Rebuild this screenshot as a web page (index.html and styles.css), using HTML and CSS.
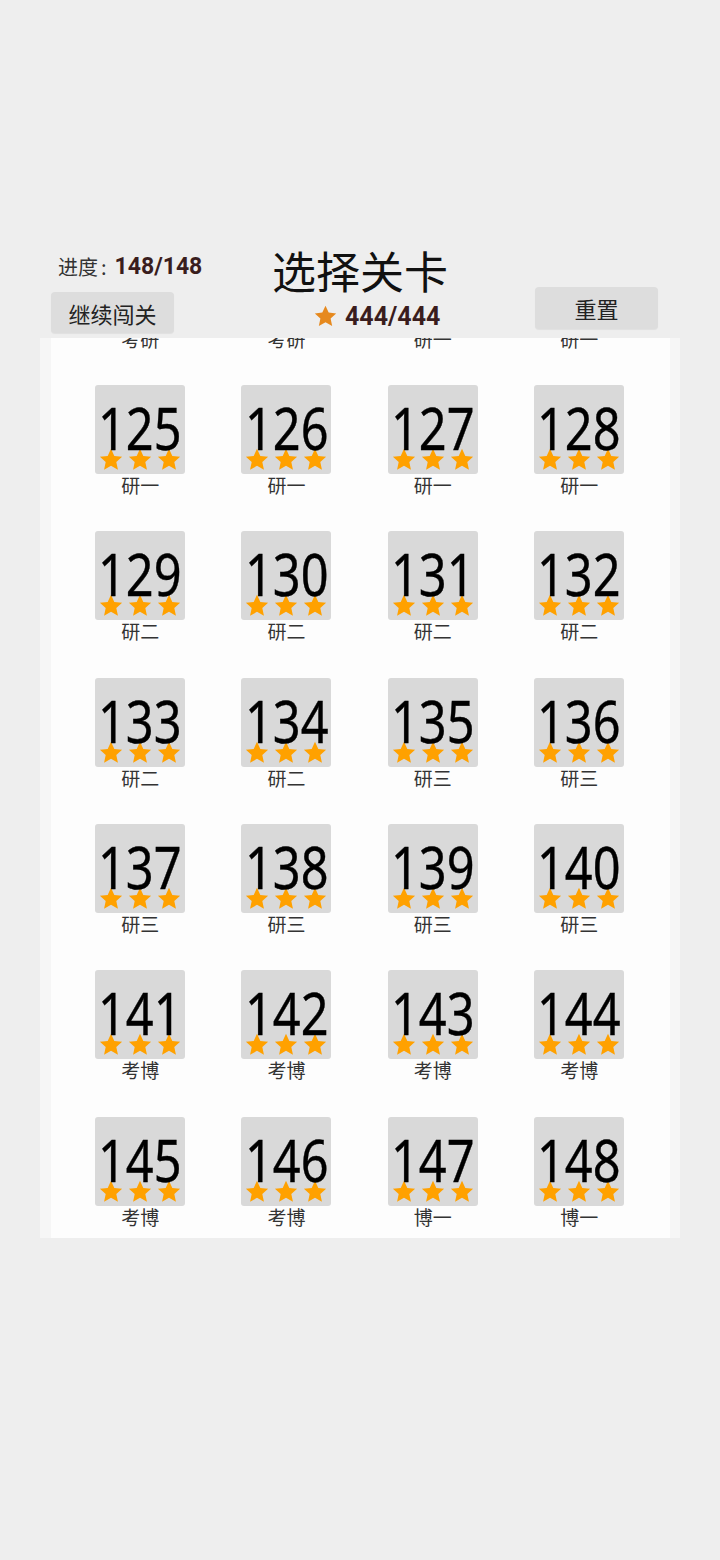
FILE: index.html
```html
<!DOCTYPE html>
<html lang="zh">
<head>
<meta charset="utf-8">
<title>选择关卡</title>
<link rel="stylesheet" href="styles.css">
</head>
<body>
<svg class="defs" width="0" height="0" aria-hidden="true">
  <symbol id="star" viewBox="0 0 24 24"><path d="M12 1.6l3.05 6.6 7.2.8-5.35 4.9 1.5 7.1L12 17.4l-6.4 3.6 1.5-7.1L1.75 9l7.2-.8z"/></symbol>
</svg>
<div class="page">
  <header class="header">
    <div class="col-left">
      <div class="progress"><span class="progress-label">进度</span><span class="progress-colon">:</span><span class="progress-num">148/148</span></div>
      <button class="btn btn-continue">继续闯关</button>
    </div>
    <div class="col-center">
      <h1 class="title">选择关卡</h1>
      <div class="total"><svg class="total-star"><use href="#star"/></svg><span class="total-num">444/444</span></div>
    </div>
    <div class="col-right">
      <button class="btn btn-reset">重置</button>
    </div>
  </header>

  <section class="panel">
    <div class="panel-inner">
      <div class="grid">
        <div class="cell"><div class="tile"><span class="num">121</span><div class="stars"><svg><use href="#star"/></svg><svg><use href="#star"/></svg><svg><use href="#star"/></svg></div></div><div class="label">考研</div></div>
        <div class="cell"><div class="tile"><span class="num">122</span><div class="stars"><svg><use href="#star"/></svg><svg><use href="#star"/></svg><svg><use href="#star"/></svg></div></div><div class="label">考研</div></div>
        <div class="cell"><div class="tile"><span class="num">123</span><div class="stars"><svg><use href="#star"/></svg><svg><use href="#star"/></svg><svg><use href="#star"/></svg></div></div><div class="label">研一</div></div>
        <div class="cell"><div class="tile"><span class="num">124</span><div class="stars"><svg><use href="#star"/></svg><svg><use href="#star"/></svg><svg><use href="#star"/></svg></div></div><div class="label">研一</div></div>

        <div class="cell"><div class="tile"><span class="num">125</span><div class="stars"><svg><use href="#star"/></svg><svg><use href="#star"/></svg><svg><use href="#star"/></svg></div></div><div class="label">研一</div></div>
        <div class="cell"><div class="tile"><span class="num">126</span><div class="stars"><svg><use href="#star"/></svg><svg><use href="#star"/></svg><svg><use href="#star"/></svg></div></div><div class="label">研一</div></div>
        <div class="cell"><div class="tile"><span class="num">127</span><div class="stars"><svg><use href="#star"/></svg><svg><use href="#star"/></svg><svg><use href="#star"/></svg></div></div><div class="label">研一</div></div>
        <div class="cell"><div class="tile"><span class="num">128</span><div class="stars"><svg><use href="#star"/></svg><svg><use href="#star"/></svg><svg><use href="#star"/></svg></div></div><div class="label">研一</div></div>

        <div class="cell"><div class="tile"><span class="num">129</span><div class="stars"><svg><use href="#star"/></svg><svg><use href="#star"/></svg><svg><use href="#star"/></svg></div></div><div class="label">研二</div></div>
        <div class="cell"><div class="tile"><span class="num">130</span><div class="stars"><svg><use href="#star"/></svg><svg><use href="#star"/></svg><svg><use href="#star"/></svg></div></div><div class="label">研二</div></div>
        <div class="cell"><div class="tile"><span class="num">131</span><div class="stars"><svg><use href="#star"/></svg><svg><use href="#star"/></svg><svg><use href="#star"/></svg></div></div><div class="label">研二</div></div>
        <div class="cell"><div class="tile"><span class="num">132</span><div class="stars"><svg><use href="#star"/></svg><svg><use href="#star"/></svg><svg><use href="#star"/></svg></div></div><div class="label">研二</div></div>

        <div class="cell"><div class="tile"><span class="num">133</span><div class="stars"><svg><use href="#star"/></svg><svg><use href="#star"/></svg><svg><use href="#star"/></svg></div></div><div class="label">研二</div></div>
        <div class="cell"><div class="tile"><span class="num">134</span><div class="stars"><svg><use href="#star"/></svg><svg><use href="#star"/></svg><svg><use href="#star"/></svg></div></div><div class="label">研二</div></div>
        <div class="cell"><div class="tile"><span class="num">135</span><div class="stars"><svg><use href="#star"/></svg><svg><use href="#star"/></svg><svg><use href="#star"/></svg></div></div><div class="label">研三</div></div>
        <div class="cell"><div class="tile"><span class="num">136</span><div class="stars"><svg><use href="#star"/></svg><svg><use href="#star"/></svg><svg><use href="#star"/></svg></div></div><div class="label">研三</div></div>

        <div class="cell"><div class="tile"><span class="num">137</span><div class="stars"><svg><use href="#star"/></svg><svg><use href="#star"/></svg><svg><use href="#star"/></svg></div></div><div class="label">研三</div></div>
        <div class="cell"><div class="tile"><span class="num">138</span><div class="stars"><svg><use href="#star"/></svg><svg><use href="#star"/></svg><svg><use href="#star"/></svg></div></div><div class="label">研三</div></div>
        <div class="cell"><div class="tile"><span class="num">139</span><div class="stars"><svg><use href="#star"/></svg><svg><use href="#star"/></svg><svg><use href="#star"/></svg></div></div><div class="label">研三</div></div>
        <div class="cell"><div class="tile"><span class="num">140</span><div class="stars"><svg><use href="#star"/></svg><svg><use href="#star"/></svg><svg><use href="#star"/></svg></div></div><div class="label">研三</div></div>

        <div class="cell"><div class="tile"><span class="num">141</span><div class="stars"><svg><use href="#star"/></svg><svg><use href="#star"/></svg><svg><use href="#star"/></svg></div></div><div class="label">考博</div></div>
        <div class="cell"><div class="tile"><span class="num">142</span><div class="stars"><svg><use href="#star"/></svg><svg><use href="#star"/></svg><svg><use href="#star"/></svg></div></div><div class="label">考博</div></div>
        <div class="cell"><div class="tile"><span class="num">143</span><div class="stars"><svg><use href="#star"/></svg><svg><use href="#star"/></svg><svg><use href="#star"/></svg></div></div><div class="label">考博</div></div>
        <div class="cell"><div class="tile"><span class="num">144</span><div class="stars"><svg><use href="#star"/></svg><svg><use href="#star"/></svg><svg><use href="#star"/></svg></div></div><div class="label">考博</div></div>

        <div class="cell"><div class="tile"><span class="num">145</span><div class="stars"><svg><use href="#star"/></svg><svg><use href="#star"/></svg><svg><use href="#star"/></svg></div></div><div class="label">考博</div></div>
        <div class="cell"><div class="tile"><span class="num">146</span><div class="stars"><svg><use href="#star"/></svg><svg><use href="#star"/></svg><svg><use href="#star"/></svg></div></div><div class="label">考博</div></div>
        <div class="cell"><div class="tile"><span class="num">147</span><div class="stars"><svg><use href="#star"/></svg><svg><use href="#star"/></svg><svg><use href="#star"/></svg></div></div><div class="label">博一</div></div>
        <div class="cell"><div class="tile"><span class="num">148</span><div class="stars"><svg><use href="#star"/></svg><svg><use href="#star"/></svg><svg><use href="#star"/></svg></div></div><div class="label">博一</div></div>
      </div>
    </div>
  </section>
</div>
</body>
</html>
```

FILE: styles.css
```css
html, body {
  margin: 0;
  padding: 0;
}
body {
  width: 720px;
  height: 1560px;
  background: #eeeeee;
  font-family: "Noto Sans CJK SC", "Noto Sans", sans-serif;
  color: #222;
  overflow: hidden;
}
.defs {
  position: absolute;
  width: 0;
  height: 0;
}
.page {
  padding-top: 246px;
}

/* header */
.header {
  display: grid;
  grid-template-columns: 1fr auto 1fr;
  height: 92px;
  padding: 0 51px;
}
.col-left {
  display: flex;
  flex-direction: column;
  align-items: flex-start;
}
.progress {
  height: 40px;
  display: flex;
  align-items: center;
  padding-left: 7px;
}
.progress-label {
  font-size: 20px;
  color: #333;
}
.progress-colon {
  font-size: 20px;
  color: #333;
  margin: 0 8px 0 3px;
}
.progress-num {
  font-family: Roboto, "Noto Sans", sans-serif;
  font-weight: 700;
  font-size: 23px;
  color: #3a1d1d;
}
.btn {
  border: none;
  background: #dddddd;
  border-radius: 4px;
  font-family: "Noto Sans CJK SC", sans-serif;
  font-size: 22px;
  color: #222;
  padding: 0;
  width: 123px;
  box-shadow: 0 1px 1px rgba(0,0,0,0.06);
}
.btn-continue {
  margin-top: 6px;
  height: 41px;
}
.col-center {
  display: flex;
  flex-direction: column;
  align-items: flex-start;
}
.title {
  margin: 0;
  font-weight: 400;
  font-size: 44px;
  line-height: 48px;
  color: #111;
}
.total {
  margin-top: 8px;
  margin-left: 41px;
  height: 28px;
  display: flex;
  align-items: center;
}
.total-star {
  width: 25px;
  height: 25px;
  fill: #e6891e;
}
.total-num {
  font-family: Roboto, "Noto Sans", sans-serif;
  font-weight: 700;
  font-size: 25px;
  color: #3a1d1d;
  margin-left: 7px;
}
.col-right {
  display: flex;
  justify-content: flex-end;
  padding-top: 41px;
  padding-right: 11px;
}
.btn-reset {
  height: 42px;
}

/* panel */
.panel {
  margin: 0 40px;
  height: 900px;
  background: #f6f6f6;
  padding: 0 10px 0 11px;
}
.panel-inner {
  height: 100%;
  background: #fdfdfd;
  overflow: hidden;
}
.grid {
  display: grid;
  grid-template-columns: repeat(4, 146.33px);
  grid-auto-rows: 146.33px;
  margin-top: -99.3px;
  padding-left: 16px;
}
.cell {
  display: flex;
  flex-direction: column;
  align-items: center;
}
.tile {
  width: 90px;
  height: 89px;
  background: #d9d9d9;
  border-radius: 3px;
  display: flex;
  flex-direction: column;
  align-items: center;
  padding-top: 14px;
  box-sizing: border-box;
}
.num {
  display: block;
  font-family: "Noto Sans", Roboto, sans-serif;
  font-size: 58px;
  line-height: 58px;
  height: 58px;
  color: #000;
  transform: scaleX(0.84);
  -webkit-text-stroke: 0.4px #000;
  white-space: nowrap;
}
.stars {
  display: flex;
  gap: 3px;
  margin-top: -10px;
}
.stars svg {
  width: 26px;
  height: 26px;
  fill: #ffa100;
}
.label {
  margin-top: 0;
  font-size: 19px;
  line-height: 22px;
  color: #333;
}
```
